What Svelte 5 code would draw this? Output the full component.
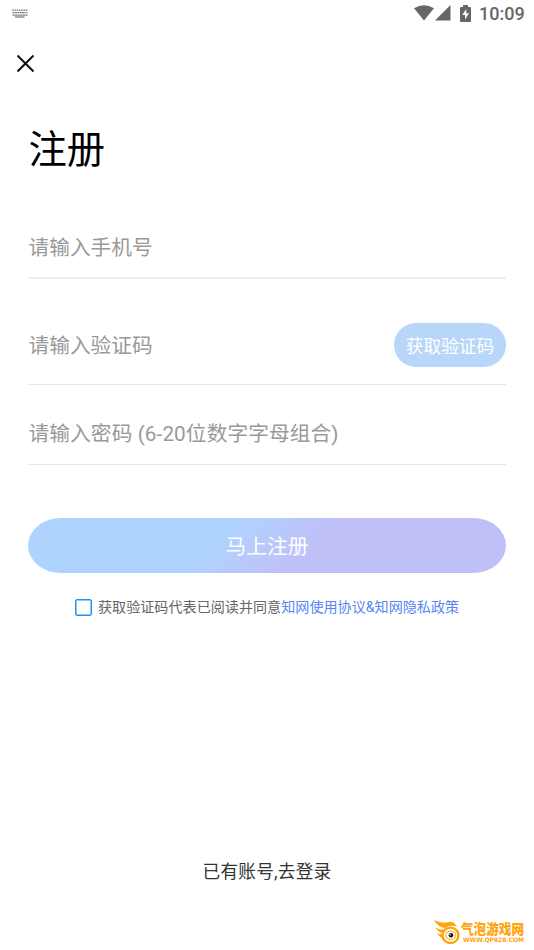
<script>
  let phone = $state('');
  let code = $state('');
  let password = $state('');
  let agreed = $state(false);
</script>

<div class="page">
  <header class="status">
    <svg class="keyboard" width="16" height="9" viewBox="0 0 16 9">
      <g fill="none" stroke="#777" stroke-width="1.25">
        <path d="M0 1.1H16" stroke-dasharray="1.6 .7" />
        <path d="M.5 3.7H15.5" stroke-dasharray="1.9 .5" />
        <path d="M.5 6H15.5" stroke-dasharray="2.2 .4" />
        <path d="M3 8H12.5" />
      </g>
    </svg>
    <div class="system">
      <svg width="20" height="16" viewBox="0 0 20 16"><path d="M0 3.2Q10-2.9 20 3.2L10 15.5Z" fill="#666" /></svg>
      <svg class="signal" width="16" height="16" viewBox="0 0 16 16"><path d="M15.5 0V15.5H0Z" fill="#666" /></svg>
      <svg class="battery" width="11" height="17" viewBox="0 0 11 17">
        <path d="M1 2H3V0H8V2H10Q11 2 11 3V16Q11 17 10 17H1Q0 17 0 16V3Q0 2 1 2Z" fill="#666" />
        <path d="M6.3 4L2.2 10H5V14.5L9 8.3H6.3Z" fill="#fff" />
      </svg>
      <span class="time">10:09</span>
    </div>
  </header>

  <button class="close" aria-label="关闭">
    <svg width="18" height="18" viewBox="0 0 18 18"><path d="M.5 .5L16.5 16.5M16.5 .5L.5 16.5" stroke="#111" stroke-width="2" /></svg>
  </button>

  <main>
    <h1>注册</h1>
    <div class="field phone"><input bind:value={phone} placeholder="请输入手机号" /></div>
    <div class="field code">
      <input bind:value={code} placeholder="请输入验证码" />
      <button class="get-code">获取验证码</button>
    </div>
    <div class="field password"><input type="password" bind:value={password} placeholder="请输入密码 (6-20位数字字母组合)" /></div>
    <button class="submit">马上注册</button>
    <div class="agreement">
      <button class="check" class:agreed role="checkbox" aria-checked={agreed} aria-label="同意协议" onclick={() => (agreed = !agreed)}></button>
      <span>获取验证码代表已阅读并同意<span class="link">知网使用协议&amp;知网隐私政策</span></span>
    </div>
  </main>

  <footer>
    <span class="login">已有账号,去登录</span>
    <div class="brand">
      <svg width="26" height="25" viewBox="0 0 26 25">
        <path d="M0 0Q8 4 15 2Q20 1 23 7Q17 4 11 8Q4 7 0 0Z" fill="#ffa40d" />
        <path d="M1 7Q6 11 11 9L8 13Q4 12 1 7ZM3 13Q6 15 9 14L8 18Q5 17 3 13Z" fill="#ffa40d" />
        <ellipse cx="16.5" cy="15.3" rx="8" ry="7.7" fill="#fff" stroke="#ffa40d" stroke-width="2.4" />
        <ellipse cx="16.7" cy="15.3" rx="5" ry="4.2" fill="#fff" stroke="#ffb83d" stroke-width="1.3" />
        <circle cx="17" cy="15.2" r="2.3" fill="#111" />
        <circle cx="16.3" cy="14.8" r=".7" fill="#fff" />
      </svg>
      <svg class="brand-text" width="66" height="25" viewBox="0 0 66 25">
        <text x="0" y="14" textLength="63" lengthAdjust="spacingAndGlyphs" class="brand-name">气泡游戏网</text>
        <text x="2" y="22.4" textLength="61" lengthAdjust="spacingAndGlyphs" class="brand-url">WWW.QP828.COM</text>
      </svg>
    </div>
  </footer>
</div>

<style>
  :global(body) { margin: 0; background: #fff; }
  .page {
    width: 534px; height: 950px; display: flex; flex-direction: column;
    overflow: hidden; background: #fff;
    font-family: Roboto, "Noto Sans CJK SC", sans-serif;
  }
  svg { display: block; flex-shrink: 0; }
  button, input { font-family: inherit; margin: 0; padding: 0; border: 0; box-sizing: border-box; outline: 0; }
  .status { height: 27px; display: flex; justify-content: space-between; align-items: center; padding: 0 9px 0 12px; box-sizing: border-box; }
  .system { display: flex; align-items: center; height: 26px; margin-bottom: 1px; }
  .signal { margin-left: 1px; }
  .battery { margin-left: 9px; margin-right: 8px; }
  .time { font-size: 18px; line-height: 26px; font-weight: 500; color: #666; width: 46px; white-space: nowrap; padding-top: 1px; }
  .close { width: 18px; height: 18px; margin: 28px 0 0 17px; background: none; flex-shrink: 0; }
  main { display: flex; flex-direction: column; padding: 46px 28px 0; }
  h1 { margin: 0; height: 60px; padding: 1px 0 0 .5px; box-sizing: border-box; font-size: 38.3px; line-height: 60px; font-weight: 400; color: #000; }
  .field { display: flex; align-items: center; box-sizing: border-box; border-bottom: 1px solid #e6e6e6; }
  .field input { flex: 1; min-width: 0; height: 40px; padding: 3px 0 0 .5px; background: none; font-size: 20.7px; color: #333; }
  .field input::placeholder { color: #999; opacity: 1; }
  .phone { height: 64px; margin-top: 36px; border-bottom-width: 2px; border-color: #eee; }
  .code { height: 80px; margin-top: 26px; }
  .get-code { width: 112px; height: 44px; border-radius: 22px; background: #b8d6fa; color: #fff; font-size: 17.7px; white-space: nowrap; }
  .password { height: 64px; margin-top: 16px; }
  .password input { padding-top: 2px; letter-spacing: .1px; }
  .submit {
    height: 55px; margin-top: 53px; padding-bottom: 2px; border-radius: 33px / 27.5px; color: #fff; font-size: 20.7px;
    background: linear-gradient(135deg, #afd3ff 40%, #c0c0f9 58%);
  }
  .agreement { display: flex; align-items: center; height: 24px; margin: 22px 0 0 47px; font-size: 14.1px; line-height: 24px; color: #666; white-space: nowrap; }
  .check { width: 17px; height: 17px; margin-right: 6px; border: 1px solid #2491f0; box-shadow: inset 0 0 0 .5px #2491f0; border-radius: 2px; background: #fff; }
  .check.agreed { background: #2491f0; }
  .link { color: #5b86f5; }
  footer { margin-top: auto; display: flex; flex-direction: column; }
  .login { align-self: center; font-size: 17.7px; line-height: 28px; letter-spacing: .22px; color: #333; }
  .brand { align-self: flex-end; display: flex; margin: 34px 7px 5px 0; }
  .brand-text { margin-left: 1px; overflow: visible; }
  .brand-name { font: 900 14px "Noto Sans CJK SC", sans-serif; fill: #ffa40d; }
  .brand-url { font: 700 6.2px "DejaVu Sans", sans-serif; fill: #ffa40d; }
</style>
